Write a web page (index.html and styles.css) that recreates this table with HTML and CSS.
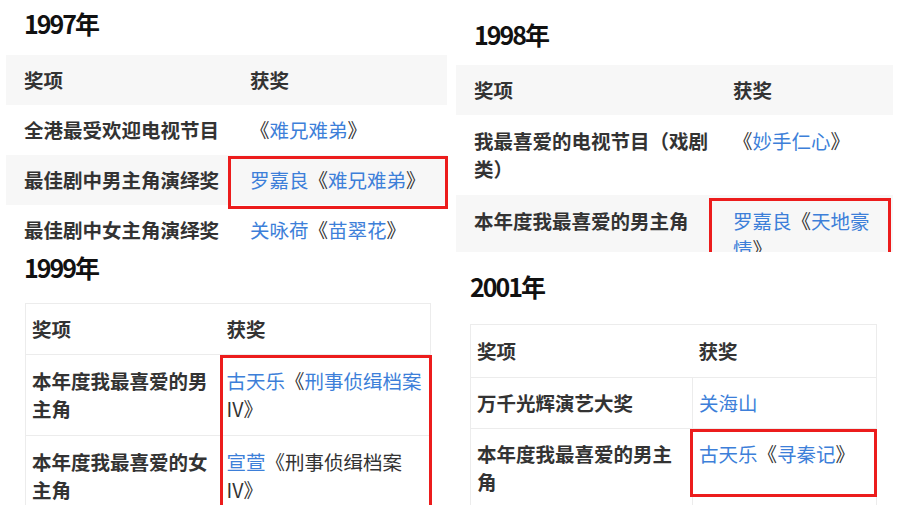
FILE: index.html
```html
<!DOCTYPE html>
<html lang="zh-CN">
<head>
    <meta charset="UTF-8">
    <meta name="viewport" content="width=device-width, initial-scale=1.0">
    <title>获奖记录</title>
    <link rel="stylesheet" href="styles.css">
</head>
<body>

    <div class="board">
        <div class="column">
            <section class="panel p1997">
                <h2>1997年</h2>
                <table class="awards striped">
                    <colgroup><col class="c1"><col class="c2"></colgroup>
                    <tr><th>奖项</th><th>获奖</th></tr>
                    <tr><td>全港最受欢迎电视节目</td><td>《<a href="#">难兄难弟</a>》</td></tr>
                    <tr><td>最佳剧中男主角演绎奖</td><td class="mark"><a href="#">罗嘉良</a>《<a href="#">难兄难弟</a>》</td></tr>
                    <tr><td>最佳剧中女主角演绎奖</td><td><a href="#">关咏荷</a>《<a href="#">苗翠花</a>》</td></tr>
                </table>
            </section>

            <section class="panel p1999">
                <h2>1999年</h2>
                <table class="awards boxed">
                    <colgroup><col class="c1"><col class="c2"></colgroup>
                    <tr><th>奖项</th><th>获奖</th></tr>
                    <tr><td>本年度我最喜爱的男主角</td><td class="mark"><a href="#">古天乐</a>《<a href="#">刑事侦缉档案</a>IV》</td></tr>
                    <tr><td>本年度我最喜爱的女主角</td><td><a href="#">宣萱</a>《刑事侦缉档案IV》</td></tr>
                </table>
            </section>
        </div>

        <div class="column">
            <section class="panel p1998">
                <h2>1998年</h2>
                <table class="awards striped">
                    <colgroup><col class="c1"><col class="c2"></colgroup>
                    <tr><th>奖项</th><th>获奖</th></tr>
                    <tr><td>我最喜爱的电视节目（戏剧类）</td><td>《<a href="#">妙手仁心</a>》</td></tr>
                    <tr><td>本年度我最喜爱的男主角</td><td class="mark"><a href="#">罗嘉良</a>《<a href="#">天地豪情</a>》</td></tr>
                </table>
            </section>

            <section class="panel p2001">
                <h2>2001年</h2>
                <table class="awards boxed ruled">
                    <colgroup><col class="c1"><col class="c2"></colgroup>
                    <tr><th>奖项</th><th>获奖</th></tr>
                    <tr><td>万千光辉演艺大奖</td><td><a href="#">关海山</a></td></tr>
                    <tr><td>本年度我最喜爱的男主角</td><td class="mark"><a href="#">古天乐</a>《<a href="#">寻秦记</a>》</td></tr>
                </table>
            </section>
        </div>
    </div>

</body>
</html>
```

FILE: styles.css
```css
* {
    box-sizing: border-box;
}
body {
    font-family: 'Noto Sans CJK SC', 'Noto Sans', sans-serif;
    background-color: #fff;
    color: #333;
    margin: 0;
    padding: 0;
    width: 900px;
    height: 505px;
    overflow: hidden;
}
.board {
    display: flex;
}
.column {
    width: 450px;
    display: flex;
    flex-direction: column;
}
.panel {
    overflow: hidden;
}
.panel h2 {
    margin: 0;
    font-size: 25px;
    line-height: 30px;
    font-weight: 700;
    letter-spacing: -2px;
    color: #111;
}
a {
    color: #3d7fd9;
    text-decoration: none;
}

/* tables */
.awards {
    border-collapse: collapse;
    table-layout: fixed;
    font-size: 19.5px;
    line-height: 28px;
}
.awards th,
.awards td {
    text-align: left;
    vertical-align: top;
    padding: 11px 10px 11px 18px;
}
.awards th,
.awards td:first-child {
    font-weight: 700;
}
.striped tr:nth-child(odd) {
    background-color: #f7f7f7;
}
.boxed {
    border: 1px solid #ececec;
}
.boxed th,
.boxed td {
    padding: 12px 6px;
    border-top: 1px solid #ececec;
}
.boxed th {
    padding: 11px 6px;
}
.ruled td + td {
    border-left: 1px solid #ececec;
}

/* highlight boxes */
.mark {
    position: relative;
}
.mark::after {
    content: "";
    position: absolute;
    border: 3px solid #ec1c1c;
}

/* 1997 */
.p1997 {
    height: 245px;
    padding: 8px 0 0 24px;
}
.p1997 .awards {
    width: 441px;
    margin: 17px 0 0 -18px;
}
.p1997 .c1 { width: 226px; }
.p1997 .c2 { width: 215px; }
.p1997 .mark::after {
    left: -4px;
    right: -1px;
    top: 1px;
    height: 47px;
}

/* 1999 */
.p1999 {
    height: 260px;
    padding: 7px 0 0 24px;
}
.p1999 .awards {
    width: 405px;
    margin: 21px 0 0 1px;
}
.p1999 .c1 { width: 195px; }
.p1999 .c2 { width: 210px; }
.p1999 .awards td:last-child {
    padding-right: 4px;
}
.p1999 .mark::after {
    left: -1px;
    right: -2px;
    top: 0;
    height: 151px;
}

/* 1998 */
.p1998 {
    height: 252px;
    margin-bottom: 3px;
    padding: 19px 0 0 24px;
}
.p1998 .awards {
    width: 437px;
    margin: 16px 0 0 -18px;
}
.p1998 .c1 { width: 259px; }
.p1998 .c2 { width: 178px; }
.p1998 .awards td {
    padding-top: 12px;
    padding-bottom: 12px;
}
.p1998 .awards td:first-child,
.p1998 .awards th:first-child {
    padding-right: 0;
}
.p1998 .mark::after {
    left: -6px;
    right: 2px;
    top: 3px;
    height: 54px;
}

/* 2001 */
.p2001 {
    height: 250px;
    padding: 16px 0 0 20px;
}
.p2001 .awards {
    width: 406px;
    margin-top: 23px;
}
.p2001 .c1 { width: 222px; }
.p2001 .c2 { width: 184px; }
.p2001 .awards td {
    padding-top: 11px;
    padding-bottom: 11px;
}
.p2001 .awards th {
    padding-top: 12px;
    padding-bottom: 12px;
}
.p2001 .mark::after {
    left: -3px;
    right: -1px;
    top: 0;
    height: 62px;
}
```
